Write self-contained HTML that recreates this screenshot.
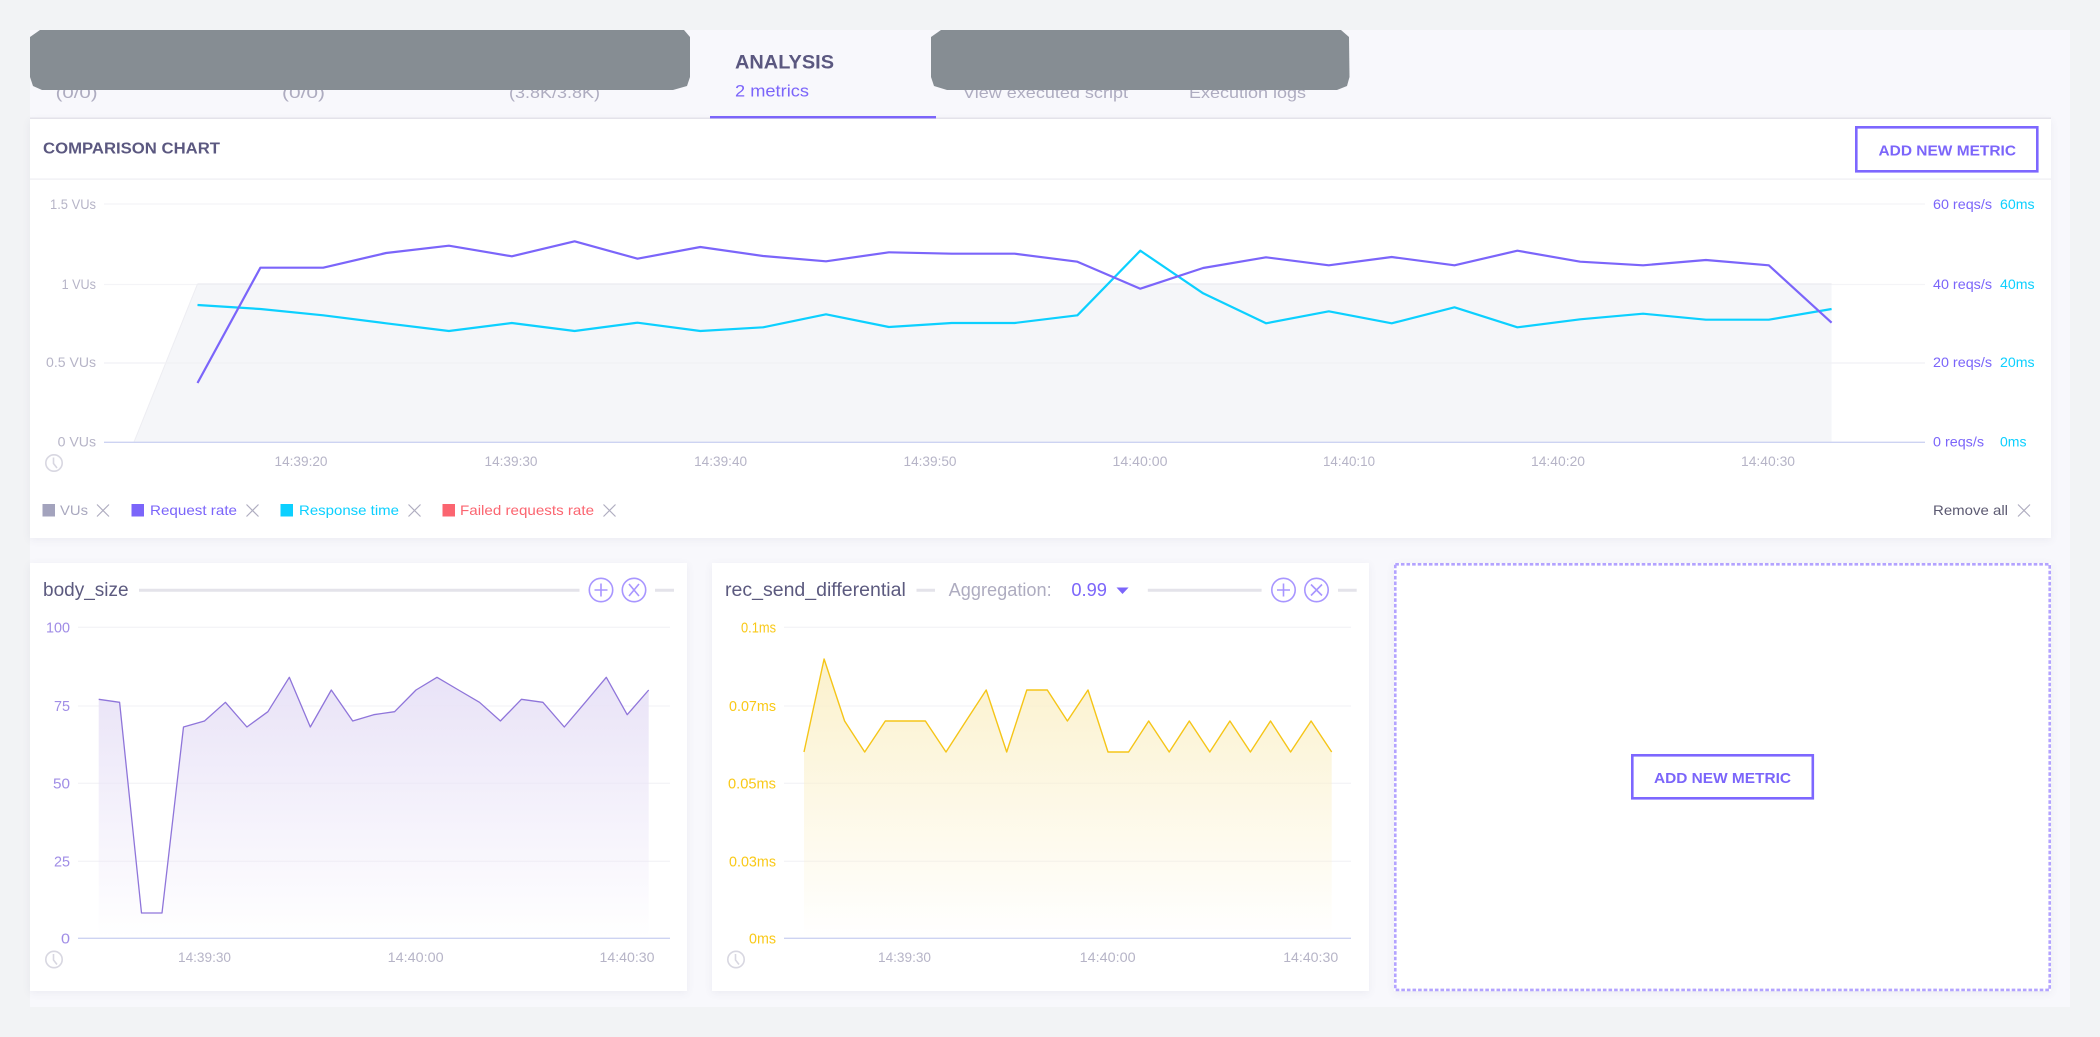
<!DOCTYPE html>
<html lang="en">
<head>
<meta charset="utf-8">
<title>Analysis</title>
<style>
html,body{margin:0;padding:0;width:2100px;height:1037px;overflow:hidden;background:#f2f3f5}
.panel{position:absolute;left:30px;top:30px;width:2040px;height:977px;background:#f8f8fc}
.card{position:absolute;background:#fff;box-shadow:0 2px 8px rgba(90,90,130,.08)}
svg{position:absolute;left:0;top:0}
text{font-family:"Liberation Sans",sans-serif;font-size:14px}
.t{fill:#b6b4c7}
.tab{font-size:16px;fill:#aeacc0}
.p{fill:#7b65fa}
.c{fill:#0cd0ff}
.v{fill:#a9a8bf}
.bp{fill:#a08de6;font-size:15px}
.by{fill:#f9c918;font-size:15px}
.ck{fill:none;stroke:#d8d7e1;stroke-width:1.6}
.xi{fill:none;stroke:#b0aec1;stroke-width:1.2}
.ic{fill:none;stroke:#a896ff;stroke-width:1.6}
.g{stroke:#f4f4f7;stroke-width:1.3}
.ax{stroke:#cdd3f2;stroke-width:1.4}
.dl{stroke:#e4e3ea;stroke-width:3}
.btn{font-size:15px;font-weight:bold;fill:#7b65fa}
</style>
</head>
<body>
<div class="panel"></div>
<div class="card" style="left:30px;top:119px;width:2021px;height:419px"></div>
<div class="card" style="left:30px;top:563px;width:657px;height:428px"></div>
<div class="card" style="left:712px;top:563px;width:657px;height:428px"></div>
<div class="card" style="left:1394px;top:563px;width:657px;height:428px"></div>

<svg width="2100" height="1037" viewBox="0 0 2100 1037">
<defs>
<linearGradient id="gp" gradientUnits="userSpaceOnUse" x1="0" y1="677" x2="0" y2="938"><stop offset="0" stop-color="#e9e3f7"/><stop offset="1" stop-color="#e9e3f7" stop-opacity="0"/></linearGradient>
<linearGradient id="gy" gradientUnits="userSpaceOnUse" x1="0" y1="659" x2="0" y2="938"><stop offset="0" stop-color="#fbf1cc"/><stop offset="1" stop-color="#fbf1cc" stop-opacity="0"/></linearGradient>
</defs>

<!-- tabs -->
<rect x="30" y="117.500" width="2021" height="1.500" fill="#e4e3ea"/>
<text class="tab" x="55.600" y="98" textLength="42" lengthAdjust="spacingAndGlyphs">(0/0)</text>
<text class="tab" x="282" y="98" textLength="43" lengthAdjust="spacingAndGlyphs">(0/0)</text>
<text class="tab" x="509" y="98" textLength="91" lengthAdjust="spacingAndGlyphs">(3.8K/3.8K)</text>
<text class="tab" x="963" y="98" textLength="165" lengthAdjust="spacingAndGlyphs">View executed script</text>
<text class="tab" x="1189" y="98" textLength="117" lengthAdjust="spacingAndGlyphs">Execution logs</text>
<polygon points="40,30 684,30 690,37 690,77 687,86 673,90 42,90 33,86 30,77 30,37" fill="#868d93"/>
<polygon points="941,30 1341,30 1349,37 1349.500,77 1347,86 1337,90 947,90 934,86 931,77 931,37" fill="#868d93"/>
<text x="735" y="68.500" textLength="99" lengthAdjust="spacingAndGlyphs" style="font-size:19px;font-weight:bold;fill:#5b5880">ANALYSIS</text>
<text x="735" y="96.500" textLength="74" lengthAdjust="spacingAndGlyphs" style="font-size:17px;fill:#7b65fa">2 metrics</text>
<rect x="710" y="116" width="226" height="2.400" fill="#7b65fa"/>

<!-- comparison header -->
<text x="43" y="153.500" textLength="177" lengthAdjust="spacingAndGlyphs" style="font-size:15.500px;font-weight:bold;fill:#5b5880">COMPARISON CHART</text>
<rect x="30" y="178.500" width="2021" height="1.200" fill="#eeeef3"/>
<rect x="1856.300" y="127.300" width="181" height="44" fill="#fff" stroke="#7d67ff" stroke-width="2.600"/>
<text class="btn" x="1878.500" y="155.300" textLength="137.500" lengthAdjust="spacingAndGlyphs">ADD NEW METRIC</text>

<!-- main chart -->
<line class="g" x1="104" y1="204" x2="1925" y2="204"/>
<line class="g" x1="1831.600" y1="284.500" x2="1925" y2="284.500"/>
<line class="g" x1="104" y1="284.500" x2="197" y2="284.500"/>
<polygon points="134,442 197.500,284 1831.600,284 1831.600,442" fill="#f5f6f9"/>
<line x1="197.500" y1="284" x2="1831.600" y2="284" stroke="#ebebf0" stroke-width="1.200"/>
<line x1="134" y1="442" x2="197.500" y2="284" stroke="#ededf2" stroke-width="1"/>
<line class="g" x1="104" y1="363" x2="1925" y2="363" style="stroke:#f1f1f5"/>
<line class="ax" x1="104" y1="442.300" x2="1925" y2="442.300"/>

<polyline fill="none" stroke="#0cd0ff" stroke-width="2.200" stroke-linejoin="round" points="197.500,305 260.400,309 323.200,315.300 386.100,323.300 448.900,331 511.800,323 574.600,331 637.500,322.700 700.300,331 763.200,327.300 826,314.300 888.900,327 951.700,323 1014.600,323 1077.400,315.300 1140.300,250.700 1203.100,293.300 1266,323.300 1328.800,311.300 1391.700,323.300 1454.500,307.300 1517.400,327.300 1580.200,319.300 1643.100,313.700 1705.900,319.700 1768.800,319.700 1831.600,309"/>
<polyline fill="none" stroke="#7b65fa" stroke-width="2.200" stroke-linejoin="round" points="197.500,383 260.400,267.700 323.200,267.700 386.100,253 448.900,245.700 511.800,256.300 574.600,241.300 637.500,258.700 700.300,247 763.200,256 826,261.300 888.900,252.300 951.700,253.700 1014.600,253.700 1077.400,261.700 1140.300,288.700 1203.100,268 1266,257.300 1328.800,265.300 1391.700,257 1454.500,265.300 1517.400,250.700 1580.200,261.700 1643.100,265.300 1705.900,260 1768.800,265.300 1831.600,322.700"/>

<text class="t" x="96" y="209" text-anchor="end" textLength="46" lengthAdjust="spacingAndGlyphs">1.5 VUs</text>
<text class="t" x="96" y="289" text-anchor="end" textLength="34.400" lengthAdjust="spacingAndGlyphs">1 VUs</text>
<text class="t" x="96" y="367" text-anchor="end" textLength="50" lengthAdjust="spacingAndGlyphs">0.5 VUs</text>
<text class="t" x="96" y="446.500" text-anchor="end" textLength="38.400" lengthAdjust="spacingAndGlyphs">0 VUs</text>

<text class="p" x="1933" y="209" textLength="59" lengthAdjust="spacingAndGlyphs">60 reqs/s</text><text class="c" x="2000" y="209" textLength="34.600" lengthAdjust="spacingAndGlyphs">60ms</text>
<text class="p" x="1933" y="289" textLength="59" lengthAdjust="spacingAndGlyphs">40 reqs/s</text><text class="c" x="2000" y="289" textLength="34.600" lengthAdjust="spacingAndGlyphs">40ms</text>
<text class="p" x="1933" y="367" textLength="59" lengthAdjust="spacingAndGlyphs">20 reqs/s</text><text class="c" x="2000" y="367" textLength="34.600" lengthAdjust="spacingAndGlyphs">20ms</text>
<text class="p" x="1933" y="446.500" textLength="51" lengthAdjust="spacingAndGlyphs">0 reqs/s</text><text class="c" x="2000" y="446.500" textLength="26.500" lengthAdjust="spacingAndGlyphs">0ms</text>

<g text-anchor="middle">
<text x="301" y="466" textLength="53" lengthAdjust="spacingAndGlyphs" class="t">14:39:20</text>
<text x="511" y="466" textLength="53" lengthAdjust="spacingAndGlyphs" class="t">14:39:30</text>
<text x="720.600" y="466" textLength="53" lengthAdjust="spacingAndGlyphs" class="t">14:39:40</text>
<text x="930" y="466" textLength="53" lengthAdjust="spacingAndGlyphs" class="t">14:39:50</text>
<text x="1140" y="466" textLength="55" lengthAdjust="spacingAndGlyphs" class="t">14:40:00</text>
<text x="1349" y="466" textLength="52" lengthAdjust="spacingAndGlyphs" class="t">14:40:10</text>
<text x="1558" y="466" textLength="54" lengthAdjust="spacingAndGlyphs" class="t">14:40:20</text>
<text x="1768" y="466" textLength="54" lengthAdjust="spacingAndGlyphs" class="t">14:40:30</text>
</g>
<g class="ck"><circle cx="54" cy="463" r="8.200"/><path d="M53.500 457.500V463.500L57 468"/></g>

<!-- legend -->
<rect x="42.500" y="504" width="12.500" height="12.500" fill="#a3a3bd"/>
<text class="v" x="60" y="515" textLength="28" lengthAdjust="spacingAndGlyphs">VUs</text>
<path class="xi" d="M97 504.500L109 516.500M109 504.500L97 516.500"/>
<rect x="131.500" y="504" width="12.500" height="12.500" fill="#7b65fa"/>
<text class="p" x="150" y="515" textLength="87" lengthAdjust="spacingAndGlyphs">Request rate</text>
<path class="xi" d="M246.500 504.500L258.500 516.500M258.500 504.500L246.500 516.500"/>
<rect x="280.500" y="504" width="12.500" height="12.500" fill="#0cd0ff"/>
<text class="c" x="299" y="515" textLength="100" lengthAdjust="spacingAndGlyphs">Response time</text>
<path class="xi" d="M408.500 504.500L420.500 516.500M420.500 504.500L408.500 516.500"/>
<rect x="442.500" y="504" width="12.500" height="12.500" fill="#fb6570"/>
<text x="460" y="515" textLength="134" lengthAdjust="spacingAndGlyphs" style="fill:#fb6570">Failed requests rate</text>
<path class="xi" d="M603.500 504.500L615.500 516.500M615.500 504.500L603.500 516.500"/>
<text x="1933" y="515" textLength="75" lengthAdjust="spacingAndGlyphs" style="fill:#5c5a72">Remove all</text>
<path class="xi" d="M2018 504.500L2030 516.500M2030 504.500L2018 516.500"/>

<!-- card 1 -->
<text x="43" y="596" textLength="85.600" lengthAdjust="spacingAndGlyphs" style="font-size:19px;fill:#5c5a7f">body_size</text>
<line class="dl" x1="139" y1="590.300" x2="579.500" y2="590.300"/>
<g class="ic"><circle cx="601" cy="590" r="11.700"/><path d="M594.500 590H607.500M601 583.500V596.500"/></g>
<g class="ic"><circle cx="634" cy="590" r="11.700"/><path d="M629 584L639 596M639 584L629 596"/></g>
<line class="dl" x1="655" y1="590.300" x2="674" y2="590.300"/>

<line class="g" x1="78" y1="627.300" x2="670" y2="627.300"/>
<line class="g" x1="78" y1="706" x2="670" y2="706"/>
<line class="g" x1="78" y1="783.300" x2="670" y2="783.300"/>
<line class="g" x1="78" y1="861.300" x2="670" y2="861.300"/>
<polygon fill="url(#gp)" points="98.700,938 98.700,699.300 119.600,702.300 141.500,913 162,913 183.500,727 204.500,721 225.400,702.300 246.900,727 267.900,711.700 289.300,677.300 310.300,727 331.300,690 352.700,721 373.700,714.700 394.600,711.700 416,690 437,677.300 458.500,690 479.500,702.300 500.400,721 521.400,699.300 542.900,702.300 564.300,727 585.300,702.300 606.300,677.300 627.200,714.700 648.700,690 648.700,938"/>
<polyline fill="none" stroke="#8f75da" stroke-width="1.300" stroke-linejoin="round" points="98.700,699.300 119.600,702.300 141.500,913 162,913 183.500,727 204.500,721 225.400,702.300 246.900,727 267.900,711.700 289.300,677.300 310.300,727 331.300,690 352.700,721 373.700,714.700 394.600,711.700 416,690 437,677.300 458.500,690 479.500,702.300 500.400,721 521.400,699.300 542.900,702.300 564.300,727 585.300,702.300 606.300,677.300 627.200,714.700 648.700,690"/>
<line class="ax" x1="78" y1="938.300" x2="670" y2="938.300"/>
<text class="bp" x="70" y="632.500" text-anchor="end" textLength="24" lengthAdjust="spacingAndGlyphs">100</text>
<text class="bp" x="70" y="711" text-anchor="end" textLength="16" lengthAdjust="spacingAndGlyphs">75</text>
<text class="bp" x="70" y="788.500" text-anchor="end" textLength="17" lengthAdjust="spacingAndGlyphs">50</text>
<text class="bp" x="70" y="866.500" text-anchor="end" textLength="16" lengthAdjust="spacingAndGlyphs">25</text>
<text class="bp" x="70" y="943.500" text-anchor="end" textLength="9" lengthAdjust="spacingAndGlyphs">0</text>
<text class="t" x="204.500" y="962" text-anchor="middle" textLength="53" lengthAdjust="spacingAndGlyphs">14:39:30</text>
<text class="t" x="415.600" y="962" text-anchor="middle" textLength="56" lengthAdjust="spacingAndGlyphs">14:40:00</text>
<text class="t" x="627" y="962" text-anchor="middle" textLength="55" lengthAdjust="spacingAndGlyphs">14:40:30</text>
<g class="ck"><circle cx="54" cy="959.500" r="8.200"/><path d="M53.500 954V960L57 964.500"/></g>

<!-- card 2 -->
<text x="725" y="596" textLength="180.800" lengthAdjust="spacingAndGlyphs" style="font-size:19px;fill:#5c5a7f">rec_send_differential</text>
<line class="dl" x1="916.500" y1="590.300" x2="935" y2="590.300"/>
<text x="948.700" y="596" textLength="103" lengthAdjust="spacingAndGlyphs" style="font-size:18px;fill:#aeacc0">Aggregation:</text>
<text x="1071.400" y="596" textLength="35.600" lengthAdjust="spacingAndGlyphs" style="font-size:18px;fill:#7b65fa">0.99</text>
<polygon points="1116.500,587.500 1128.600,587.500 1122.500,594" fill="#7b65fa"/>
<line class="dl" x1="1147.800" y1="590.300" x2="1261.600" y2="590.300"/>
<g class="ic"><circle cx="1283.500" cy="590" r="11.700"/><path d="M1277 590H1290M1283.500 583.500V596.500"/></g>
<g class="ic"><circle cx="1316.500" cy="590" r="11.700"/><path d="M1311 584.500L1322 595.500M1322 584.500L1311 595.500"/></g>
<line class="dl" x1="1338" y1="590.300" x2="1356.700" y2="590.300"/>

<line class="g" x1="784" y1="627.300" x2="1351" y2="627.300"/>
<line class="g" x1="784" y1="706" x2="1351" y2="706"/>
<line class="g" x1="784" y1="783.300" x2="1351" y2="783.300"/>
<line class="g" x1="784" y1="861.300" x2="1351" y2="861.300"/>
<polygon fill="url(#gy)" points="804,938 804,752 824.100,659 844.600,721 864.700,752 885.300,721 905.400,721 925.400,721 946,752 966,721 986.200,690 1006.700,752 1026.800,690 1047.300,690 1067.400,721 1088,690 1108,752 1128.600,752 1148.700,721 1169.200,752 1189.300,721 1209.800,752 1229.900,721 1250.400,752 1270.500,721 1290.600,752 1311.100,721 1331.700,752 1331.700,938"/>
<polyline fill="none" stroke="#f5c518" stroke-width="1.400" stroke-linejoin="round" points="804,752 824.100,659 844.600,721 864.700,752 885.300,721 905.400,721 925.400,721 946,752 966,721 986.200,690 1006.700,752 1026.800,690 1047.300,690 1067.400,721 1088,690 1108,752 1128.600,752 1148.700,721 1169.200,752 1189.300,721 1209.800,752 1229.900,721 1250.400,752 1270.500,721 1290.600,752 1311.100,721 1331.700,752"/>
<line class="ax" x1="784" y1="938.300" x2="1351" y2="938.300"/>
<text class="by" x="776" y="632.500" text-anchor="end" textLength="35" lengthAdjust="spacingAndGlyphs">0.1ms</text>
<text class="by" x="776" y="711" text-anchor="end" textLength="47" lengthAdjust="spacingAndGlyphs">0.07ms</text>
<text class="by" x="776" y="788.500" text-anchor="end" textLength="48" lengthAdjust="spacingAndGlyphs">0.05ms</text>
<text class="by" x="776" y="866.500" text-anchor="end" textLength="47" lengthAdjust="spacingAndGlyphs">0.03ms</text>
<text class="by" x="776" y="943.500" text-anchor="end" textLength="27" lengthAdjust="spacingAndGlyphs">0ms</text>
<text class="t" x="904.500" y="962" text-anchor="middle" textLength="53" lengthAdjust="spacingAndGlyphs">14:39:30</text>
<text class="t" x="1107.600" y="962" text-anchor="middle" textLength="56" lengthAdjust="spacingAndGlyphs">14:40:00</text>
<text class="t" x="1310.700" y="962" text-anchor="middle" textLength="55" lengthAdjust="spacingAndGlyphs">14:40:30</text>
<g class="ck"><circle cx="736" cy="959.500" r="8.200"/><path d="M735.500 954V960L739 964.500"/></g>

<!-- card 3 -->
<rect x="1395.300" y="564.300" width="654.400" height="425.600" fill="none" stroke="#b3a3ff" stroke-width="2.600" stroke-dasharray="3.600 2"/>
<rect x="1632.300" y="755.300" width="180.500" height="43" fill="#fff" stroke="#7d67ff" stroke-width="2.600"/>
<text class="btn" x="1654" y="782.800" textLength="137" lengthAdjust="spacingAndGlyphs">ADD NEW METRIC</text>
</svg>
</body>
</html>
